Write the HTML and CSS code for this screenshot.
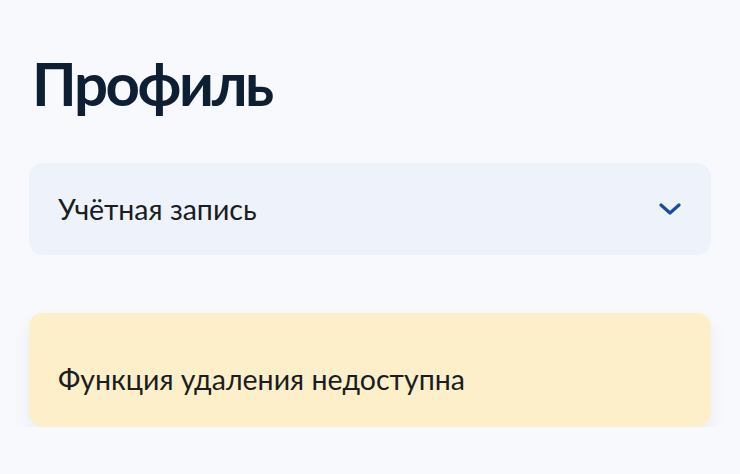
FILE: index.html
```html
<!DOCTYPE html>
<html lang="ru">
<head>
<meta charset="utf-8">
<link rel="stylesheet" href="styles.css">
</head>
<body>
<main class="page">
  <h1 class="title">Профиль</h1>
  <div class="accordion">
    <span class="accordion-label">Учётная запись</span>
    <svg class="chevron" width="22" height="12" viewBox="0 0 22 12" fill="none"><path d="M2 2l9 8 9-8" stroke="#1d4b9f" stroke-width="3.2" stroke-linecap="round" stroke-linejoin="round"/></svg>
  </div>
  <div class="notice">
    <span class="notice-text">Функция удаления недоступна</span>
  </div>
</main>
</body>
</html>
```
FILE: styles.css
```css
html, body {
  margin: 0;
  padding: 0;
  background: #f7f9fd;
}
body {
  font-family: Lato, "Noto Sans", sans-serif;
  color: #1a1d21;
}
.page {
  padding: 47px 29px 0 29px;
  display: flex;
  flex-direction: column;
}
.title {
  margin: 0 0 0 3px;
  font-size: 60px;
  font-weight: 700;
  line-height: 72px;
  letter-spacing: -2.4px;
  color: #0e1f33;
}
.accordion {
  margin-top: 44px;
  height: 92px;
  box-sizing: border-box;
  background: #eef2fb;
  border-radius: 14px;
  display: flex;
  align-items: center;
  justify-content: space-between;
  padding: 0 30px 0 29px;
}
.accordion-label {
  font-size: 28.5px;
  line-height: 34px;
}
.chevron {
  display: block;
}
.notice {
  margin-top: 58px;
  height: 114px;
  box-sizing: border-box;
  background: #fdefc9;
  border-radius: 14px;
  box-shadow: 0 8px 18px rgba(20, 40, 90, 0.06);
  display: flex;
  align-items: center;
  padding: 18px 29px 0 29px;
}
.notice-text {
  font-size: 28.5px;
  line-height: 34px;
}
```
